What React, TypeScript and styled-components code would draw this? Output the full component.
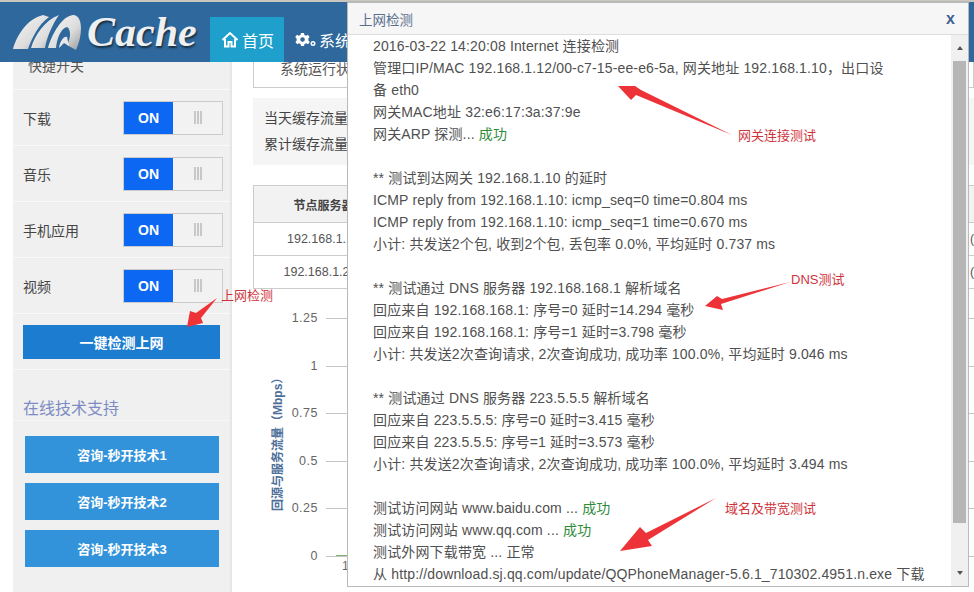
import styled, { createGlobalStyle } from "styled-components";

const GlobalStyle = createGlobalStyle`
  html, body {
    margin: 0;
    padding: 0;
    background: #fff;
  }
  body {
    font-family: "Liberation Sans", "Noto Sans CJK SC", sans-serif;
    color: #333;
  }
`;

const Page = styled.div`
  position: relative;
  width: 974px;
  height: 592px;
  overflow: hidden;
  background: #fff;
`;

const Header = styled.header`
  height: 62px;
  box-sizing: border-box;
  border-top: 2px solid #c9c7bd;
  background: #2f689c;
  display: flex;
  align-items: flex-end;
  padding-left: 13px;
  position: relative;
  z-index: 2;
`;

const Logo = styled.div`
  width: 197px;
  height: 60px;
  display: flex;
  align-items: center;
  gap: 6px;
  svg {
    flex: none;
  }
`;

const LogoText = styled.span`
  font-family: "Liberation Serif", serif;
  font-style: italic;
  font-weight: bold;
  font-size: 42px;
  color: #eef0f2;
  text-shadow: 1px 2px 2px rgba(20, 30, 40, 0.8);
`;

const NavItem = styled.div<{ $active?: boolean }>`
  height: 45px;
  padding: 0 10px 0 11px;
  display: flex;
  align-items: center;
  gap: 3px;
  font-size: 16px;
  color: #fff;
  background: ${(props) => (props.$active ? "#1f9fcb" : "transparent")};
`;

const Layout = styled.div`
  display: flex;
  height: 530px;
`;

const Sidebar = styled.aside`
  width: 219px;
  margin-left: 13px;
  margin-top: -28px;
  background: #f0f0f0;
  border-right: 2px solid #e6e6e6;
  box-sizing: border-box;
  display: flex;
  flex-direction: column;
`;

const Row = styled.div`
  height: 56px;
  box-sizing: border-box;
  flex: none;
  display: flex;
  align-items: center;
  justify-content: space-between;
  padding: 0 7px 0 10px;
  border-bottom: 1px solid #fafafa;
  font-size: 14px;
  color: #444;
`;

const QuickTitle = styled(Row)`
  align-items: flex-end;
  padding: 0 0 14px 15px;
  color: #555;
`;

const Toggle = styled.div`
  width: 100px;
  height: 34px;
  box-sizing: border-box;
  border: 1px solid #ccc;
  display: flex;
`;

const ToggleOn = styled.div`
  width: 49px;
  background: #0c68f2;
  color: #fff;
  font-weight: bold;
  font-size: 14px;
  display: flex;
  align-items: center;
  justify-content: center;
`;

const ToggleOff = styled.div`
  flex: 1;
  background: #f2f2f2;
  display: flex;
  align-items: center;
  justify-content: center;
`;

const Grip = styled.i`
  display: block;
  width: 8px;
  height: 13px;
  background: repeating-linear-gradient(
    to right,
    #c8c8c8 0 2px,
    #f2f2f2 2px 3px
  );
`;

const CheckButton = styled.div`
  width: 197px;
  height: 34px;
  background: #1b7cd0;
  color: #fff;
  font-weight: bold;
  font-size: 14px;
  display: flex;
  align-items: center;
  justify-content: center;
`;

const SupportTitle = styled.div`
  flex: none;
  height: 51px;
  box-sizing: border-box;
  padding: 29px 0 0 10px;
  font-size: 16px;
  line-height: 20px;
  color: #7d8cc4;
  border-bottom: 1px solid #f6f6f6;
`;

const SupportList = styled.div`
  display: flex;
  flex-direction: column;
  gap: 10px;
  padding: 15px 0 0 12px;
`;

const SupportButton = styled.div`
  width: 194px;
  height: 37px;
  background: #3293da;
  color: #fff;
  font-weight: bold;
  font-size: 13px;
  display: flex;
  align-items: center;
  justify-content: center;
`;

const Main = styled.main`
  flex: 1;
  padding-left: 21px;
  overflow: hidden;
  min-width: 0;
`;

const StatusTitle = styled.div`
  height: 26px;
  box-sizing: border-box;
  border: 1px solid #ccc;
  border-top: none;
  padding-left: 26px;
  font-size: 14px;
  line-height: 14px;
  color: #555;
`;

const Stats = styled.div`
  margin-top: 10px;
  height: 67px;
  background: #f5f5f5;
  box-sizing: border-box;
  padding: 7px 11px 0;
  font-size: 14px;
  line-height: 26px;
  color: #444;
`;

const Table = styled.table`
  margin-top: 20px;
  width: 730px;
  table-layout: fixed;
  border-collapse: collapse;
  font-size: 12.5px;
  color: #555;
  th {
    height: 36px;
    background: #f2f2f2;
    font-size: 12px;
    color: #444;
  }
  td {
    height: 32px;
    text-align: center;
  }
  th,
  td {
    border: 1px solid #ccc;
    padding: 0;
    white-space: nowrap;
    overflow: hidden;
  }
`;

const NodeCol = styled.col`
  width: 140px;
`;

const StateCol = styled.col`
  width: 574px;
`;

const RateCell = styled.td`
  && {
    text-align: left;
    padding-left: 2px;
  }
`;

const Chart = styled.div`
  position: relative;
  height: 300px;
  width: 721px;
`;

const AxisTitle = styled.div`
  position: absolute;
  left: -43px;
  top: 147px;
  width: 136px;
  height: 14px;
  line-height: 14px;
  transform: rotate(-90deg);
  font-size: 12px;
  font-weight: bold;
  color: #4d6f99;
  white-space: nowrap;
`;

const Tick = styled.div<{ $y: number }>`
  position: absolute;
  top: ${(props) => props.$y}px;
  left: 0;
  right: 0;
  display: flex;
  align-items: center;
  gap: 8px;
  font-size: 12.5px;
  letter-spacing: 0.5px;
  color: #666;
  line-height: 14px;
  &::after {
    content: "";
    flex: 1;
    height: 1px;
    background: #c4c4c4;
  }
`;

const TickLabel = styled.span`
  width: 65px;
  text-align: right;
`;

const SeriesStart = styled.div`
  position: absolute;
  left: 83px;
  top: 266px;
  width: 12px;
  height: 1px;
  background: #7cb56b;
`;

const XLabel = styled.span`
  position: absolute;
  left: 89px;
  top: 270px;
  font-size: 12px;
  line-height: 14px;
  color: #666;
`;

const Modal = styled.section`
  position: absolute;
  left: 347px;
  top: 1px;
  width: 622px;
  height: 586px;
  box-sizing: border-box;
  border: 1px solid #b9b9b9;
  border-top-width: 2px;
  background: #fff;
  z-index: 5;
  display: flex;
  flex-direction: column;
`;

const ModalHeader = styled.div`
  height: 32px;
  flex: none;
  box-sizing: border-box;
  background: #f6f6f6;
  border-bottom: 1px solid #ddd;
  display: flex;
  align-items: center;
  justify-content: space-between;
  padding: 0 13px 0 11px;
  font-size: 13.5px;
  color: #5a7090;
`;

const CloseX = styled.span`
  font-size: 16px;
  font-weight: bold;
  color: #3f6391;
`;

const ModalBody = styled.div`
  flex: 1;
  min-height: 0;
  display: flex;
`;

const LogText = styled.div`
  flex: 1;
  overflow: hidden;
  padding-left: 25px;
  font-size: 14px;
  letter-spacing: 0.15px;
  line-height: 22px;
  color: #505050;
`;

const LogLine = styled.div`
  height: 22px;
  white-space: nowrap;
`;

const Ok = styled.span`
  color: #2e8b3a;
`;

const Scrollbar = styled.div`
  width: 17px;
  flex: none;
  background: #f0f0f0;
  display: flex;
  flex-direction: column;
  align-items: center;
`;

const ScrollArrow = styled.div<{ $down?: boolean }>`
  height: 26px;
  width: 100%;
  flex: none;
  display: flex;
  align-items: center;
  justify-content: center;
  &::before {
    content: "";
    border-left: 3.5px solid transparent;
    border-right: 3.5px solid transparent;
    ${(props) =>
      props.$down
        ? "border-top: 4px solid #555;"
        : "border-bottom: 4px solid #555;"}
  }
`;

const ScrollThumb = styled.div`
  width: 13px;
  height: 462px;
  flex: none;
  background: #b6b6b6;
`;

const ScrollGap = styled.div`
  flex: 1;
`;

const Markup = styled.svg`
  position: absolute;
  left: 0;
  top: 0;
  z-index: 6;
  pointer-events: none;
`;

const Note = styled.span<{ $x: number; $y: number }>`
  position: absolute;
  left: ${(props) => props.$x}px;
  top: ${(props) => props.$y}px;
  z-index: 7;
  font-size: 13px;
  line-height: 15px;
  color: #d0343c;
  white-space: nowrap;
`;

const switches = ["下载", "音乐", "手机应用", "视频"];
const support = ["咨询-秒开技术1", "咨询-秒开技术2", "咨询-秒开技术3"];
const ticks = [
  ["1.25", 22],
  ["1", 70],
  ["0.75", 117],
  ["0.5", 165],
  ["0.25", 212],
  ["0", 260],
] as const;

const logLines: (string | { text: string; ok: string })[] = [
  "2016-03-22 14:20:08 Internet 连接检测",
  "管理口IP/MAC 192.168.1.12/00-c7-15-ee-e6-5a, 网关地址 192.168.1.10，出口设",
  "备 eth0",
  "网关MAC地址 32:e6:17:3a:37:9e",
  { text: "网关ARP 探测... ", ok: "成功" },
  "",
  "** 测试到达网关 192.168.1.10 的延时",
  "ICMP reply from 192.168.1.10: icmp_seq=0 time=0.804 ms",
  "ICMP reply from 192.168.1.10: icmp_seq=1 time=0.670 ms",
  "小计: 共发送2个包, 收到2个包, 丢包率 0.0%, 平均延时 0.737 ms",
  "",
  "** 测试通过 DNS 服务器 192.168.168.1 解析域名",
  "回应来自 192.168.168.1: 序号=0 延时=14.294 毫秒",
  "回应来自 192.168.168.1: 序号=1 延时=3.798 毫秒",
  "小计: 共发送2次查询请求, 2次查询成功, 成功率 100.0%, 平均延时 9.046 ms",
  "",
  "** 测试通过 DNS 服务器 223.5.5.5 解析域名",
  "回应来自 223.5.5.5: 序号=0 延时=3.415 毫秒",
  "回应来自 223.5.5.5: 序号=1 延时=3.573 毫秒",
  "小计: 共发送2次查询请求, 2次查询成功, 成功率 100.0%, 平均延时 3.494 ms",
  "",
  { text: "测试访问网站 www.baidu.com ... ", ok: "成功" },
  { text: "测试访问网站 www.qq.com ... ", ok: "成功" },
  "测试外网下载带宽 ... 正常",
  "从 http://download.sj.qq.com/update/QQPhoneManager-5.6.1_710302.4951.n.exe 下载",
];

function App() {
  return (
    <Page>
      <GlobalStyle />
      <Header>
        <Logo>
          <svg width="68" height="37" viewBox="0 0 68 37">
            <defs>
              <linearGradient id="arch" x1="0" y1="0" x2="1" y2="1">
                <stop offset="0" stopColor="#f8f8f8" />
                <stop offset="0.6" stopColor="#dcdcdc" />
                <stop offset="1" stopColor="#9a9a9a" />
              </linearGradient>
            </defs>
            <path d="M0 35C4 21 14 5 30 1L36 3C25 11 19 24 15 35Z" fill="url(#arch)" />
            <path d="M18 34C22 21 31 7 46 1C39 11 34 23 32 34Z" fill="url(#arch)" />
            <path
              d="M35 34C39 20 49 2 60 1C66 1 68 8 68 14C68 22 66 29 63 36L54 31C58 24 58 15 54 13C47 15 44 25 43 34Z"
              fill="url(#arch)"
            />
            <path d="M46 34C47 27 51 22 54 23L56 32L51 29Z" fill="#e8e8e8" />
          </svg>
          <LogoText>Cache</LogoText>
        </Logo>
        <NavItem $active>
          <svg
            width="18"
            height="17"
            viewBox="0 0 18 17"
            fill="none"
            stroke="#fff"
            strokeWidth="2"
          >
            <path d="M1.5 9L9 2L16.5 9" />
            <path d="M4 8V15.5H7.5V11H10.5V15.5H14V8" />
          </svg>
          首页
        </NavItem>
        <NavItem>
          <svg width="21" height="16" viewBox="0 0 21 16" fill="#fff">
            <path
              fillRule="evenodd"
              d="M6 1H9L9.4 3L11 3.8L12.8 2.8L14.6 5L13.3 6.5L13.4 8.5L14.8 10L13 12.2L11.2 11.3L9.5 12L9 14H6L5.6 12L4 11.2L2.2 12.2L.4 10L1.7 8.5L1.6 6.5L.2 5L2 2.8L3.8 3.7L5.5 3ZM7.5 5.2A2.3 2.3 0 1 0 7.6 9.8A2.3 2.3 0 1 0 7.5 5.2Z"
            />
            <path
              fillRule="evenodd"
              d="M18 9A2.5 2.5 0 1 0 18 14A2.5 2.5 0 1 0 18 9ZM18 10.5A1 1 0 1 1 18 12.5A1 1 0 1 1 18 10.5Z"
            />
          </svg>
          系统
        </NavItem>
      </Header>
      <Layout>
        <Sidebar>
          <QuickTitle>快捷开关</QuickTitle>
          {switches.map((name) => (
            <Row key={name}>
              {name}
              <Toggle>
                <ToggleOn>ON</ToggleOn>
                <ToggleOff>
                  <Grip />
                </ToggleOff>
              </Toggle>
            </Row>
          ))}
          <Row>
            <CheckButton>一键检测上网</CheckButton>
          </Row>
          <SupportTitle>在线技术支持</SupportTitle>
          <SupportList>
            {support.map((name) => (
              <SupportButton key={name}>{name}</SupportButton>
            ))}
          </SupportList>
        </Sidebar>
        <Main>
          <StatusTitle>系统运行状态</StatusTitle>
          <Stats>
            <div>当天缓存流量</div>
            <div>累计缓存流量</div>
          </Stats>
          <Table>
            <colgroup>
              <NodeCol />
              <StateCol />
              <col />
            </colgroup>
            <thead>
              <tr>
                <th>节点服务器</th>
                <th>状态</th>
                <th>&nbsp;</th>
              </tr>
            </thead>
            <tbody>
              <tr>
                <td>192.168.1.10</td>
                <td>&nbsp;</td>
                <RateCell>(8</RateCell>
              </tr>
              <tr>
                <td>192.168.1.200</td>
                <td>&nbsp;</td>
                <RateCell>(8</RateCell>
              </tr>
            </tbody>
          </Table>
          <Chart>
            <AxisTitle>回源与服务流量（Mbps）</AxisTitle>
            {ticks.map(([label, y]) => (
              <Tick key={label} $y={y}>
                <TickLabel>{label}</TickLabel>
              </Tick>
            ))}
            <SeriesStart />
            <XLabel>1</XLabel>
          </Chart>
        </Main>
      </Layout>
      <Modal>
        <ModalHeader>
          上网检测
          <CloseX>x</CloseX>
        </ModalHeader>
        <ModalBody>
          <LogText>
            {logLines.map((line, i) =>
              typeof line === "string" ? (
                <LogLine key={i}>{line}</LogLine>
              ) : (
                <LogLine key={i}>
                  {line.text}
                  <Ok>{line.ok}</Ok>
                </LogLine>
              )
            )}
          </LogText>
          <Scrollbar>
            <ScrollArrow />
            <ScrollThumb />
            <ScrollGap />
            <ScrollArrow $down />
          </Scrollbar>
        </ModalBody>
      </Modal>
      <Markup width="974" height="592" viewBox="0 0 974 592">
        <g fill="#ee3338">
          <path d="M217 298L196 313L190 311L187 327L203 323L201 318Z" />
          <path d="M732 135L641 90L635 86L618 86L631 100L636 95Z" />
          <path d="M790 282L722 299L717 296L705 306L723 310L721 304Z" />
          <path d="M716 498L646 533L640 527L620 551L652 546L648 540Z" />
        </g>
      </Markup>
      <Note $x={221} $y={288}>上网检测</Note>
      <Note $x={738} $y={128}>网关连接测试</Note>
      <Note $x={791} $y={272}>DNS测试</Note>
      <Note $x={725} $y={501}>域名及带宽测试</Note>
    </Page>
  );
}

export default App;
